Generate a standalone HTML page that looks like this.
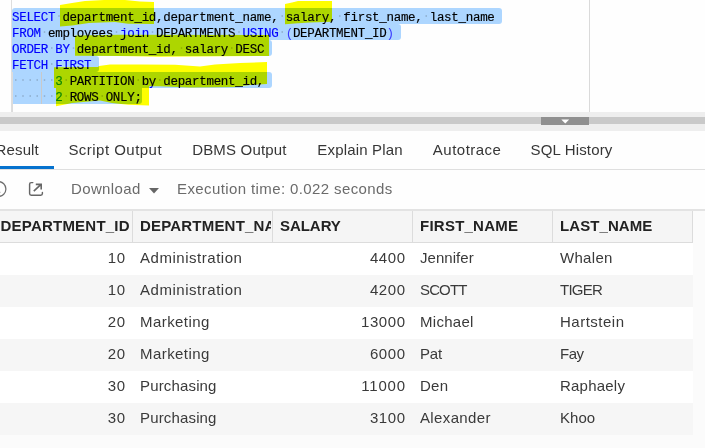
<!DOCTYPE html>
<html><head><meta charset="utf-8">
<style>
*{box-sizing:border-box;}
html,body{margin:0;padding:0;}
body{width:705px;height:448px;overflow:hidden;position:relative;background:#fefefe;font-family:"Liberation Sans",sans-serif;}
.abs{position:absolute;}
.t{position:absolute;white-space:nowrap;}
#editor{left:0;top:0;width:705px;height:112px;background:#fefefe;overflow:hidden;}
.gl{left:11px;top:0;width:1px;height:112px;background:#dedede;}
.ruler{left:589px;top:0;width:1px;height:112px;background:#dadada;}
.sel{background:#add6ff;}
.code{left:12px;top:9.5px;font-family:"Liberation Mono",monospace;font-size:12.5px;letter-spacing:-0.3px;line-height:16px;color:#000;-webkit-text-stroke:0.15px currentColor;}
.code div{height:16px;white-space:pre;}
.k{color:#0000ff;}
.n{color:#098658;}
.b{color:#3a3aff;-webkit-text-stroke:0;}
.w{color:rgba(51,51,51,0.2);-webkit-text-stroke:0;position:relative;top:-1px;}
.ig{width:1px;height:16px;background:#c9c9c9;}
svg.hl{left:0;top:0;mix-blend-mode:multiply;}
#split{left:0;top:112px;width:705px;height:19px;background:#eeeeee;}
#split .band{left:0;top:5px;width:705px;height:7px;background:#c9c9c9;}
#split .handle{left:541px;top:5px;width:48px;height:8px;background:#909090;}
.uline{left:0;top:166px;width:54px;height:3px;background:#0572ce;}
.sep{left:0;top:169px;width:705px;height:1px;background:#dfdfdf;}
.topb{left:0;top:209px;width:705px;height:2px;background:#e3e3e3;}
.hdr{top:211px;height:32px;background:#f5f5f5;border-right:1px solid #dcdcdc;border-bottom:1px solid #dcdcdc;}
.gridbg{left:0;top:211px;width:705px;height:237px;background:#fbfbfb;}
</style></head>
<body>
<div id="editor" class="abs">
  <div class="abs gl"></div>
  <div class="abs ruler"></div>
  <div class="abs sel" style="left:12px;top:8px;width:490px;height:16px;border-radius:3px 3px 3px 0;"></div>
  <div class="abs sel" style="left:12px;top:24px;width:389px;height:16px;border-radius:0 3px 3px 0;"></div>
  <div class="abs sel" style="left:12px;top:40px;width:260px;height:16px;border-radius:0 3px 3px 0;"></div>
  <div class="abs sel" style="left:12px;top:56px;width:87px;height:16px;border-radius:0 3px 3px 0;"></div>
  <div class="abs sel" style="left:12px;top:72px;width:260px;height:16px;border-radius:0 3px 3px 0;"></div>
  <div class="abs sel" style="left:12px;top:88px;width:130px;height:16px;border-radius:0 0 3px 1px;"></div>
  <div class="abs ig" style="left:12px;top:72px;height:40px;background:#dcdcdc;"></div>
  <div class="abs ig" style="left:41px;top:72px;"></div>
  <div class="abs ig" style="left:41px;top:88px;"></div>
  <div class="abs code">
<div><span class="k">SELECT</span><span class="w">·</span>department_id,department_name,<span class="w">·</span>salary,<span class="w">·</span>first_name,<span class="w">·</span>last_name</div>
<div><span class="k">FROM</span><span class="w">·</span>employees<span class="w">·</span><span class="k">join</span><span class="w">·</span>DEPARTMENTS<span class="w">·</span><span class="k">USING</span><span class="w">·</span><span class="b">(</span>DEPARTMENT_ID<span class="b">)</span></div>
<div><span class="k">ORDER</span><span class="w">·</span><span class="k">BY</span><span class="w">·</span>department_id,<span class="w">·</span>salary<span class="w">·</span>DESC</div>
<div><span class="k">FETCH</span><span class="w">·</span><span class="k">FIRST</span></div>
<div><span class="w">······</span><span class="n">3</span><span class="w">·</span>PARTITION<span class="w">·</span><span class="k">by</span><span class="w">·</span>department_id,</div>
<div><span class="w">······</span><span class="n">2</span><span class="w">·</span>ROWS<span class="w">·</span>ONLY;</div>
  </div>
  <svg class="abs hl" width="705" height="112" viewBox="0 0 705 112">
    <g fill="#ffff00">
      <polygon points="60,5 72,3 85,1 104,0 125,0 140,1.5 154,2 154,24 128,23.8 115,22 89,23 72,25.5 60,26.4"/>
      <polygon points="285,4 292,2.5 298,1 332,1 332,21.8 310,22.5 298,23.3 285,24.3"/>
      <polygon points="75,35.5 120,34.8 269,35 269,56 160,56.8 120,56 75,55.8"/>
      <polygon points="54,67.2 98,67 99,66 110,64.5 140,64.6 175,64.8 200,66.5 215,64.5 240,63 267,62 267,84 250,85 235,87 190,87.4 160,86.2 149,86.2 149,105.5 128,104.7 112,103 100,100.4 72,102.9 65,104.6 56,106.3 56,88 54,88"/>
    </g>
  </svg>
</div>
<div id="split" class="abs">
  <div class="abs band"></div>
  <div class="abs handle"></div>
  <svg class="abs" style="left:561px;top:6.5px" width="10" height="6"><polygon points="0.3,0.5 8.2,0.5 4.25,4.6" fill="#fff"/></svg>
</div>
<div class="abs uline"></div>
<div class="abs sep"></div>
<div class="t" style="top:142.00px;font-size:15.0px;line-height:15.0px;color:#363636;letter-spacing:0.123px;left:-4.40px;">Result</div>
<div class="t" style="top:142.00px;font-size:15.0px;line-height:15.0px;color:#363636;letter-spacing:0.473px;left:68.40px;">Script Output</div>
<div class="t" style="top:142.00px;font-size:15.0px;line-height:15.0px;color:#363636;letter-spacing:0.172px;left:192.20px;">DBMS Output</div>
<div class="t" style="top:142.00px;font-size:15.0px;line-height:15.0px;color:#363636;letter-spacing:0.175px;left:317.30px;">Explain Plan</div>
<div class="t" style="top:142.00px;font-size:15.0px;line-height:15.0px;color:#363636;letter-spacing:0.493px;left:432.80px;">Autotrace</div>
<div class="t" style="top:142.00px;font-size:15.0px;line-height:15.0px;color:#363636;letter-spacing:0.152px;left:530.50px;">SQL History</div>
<svg class="abs" style="left:0;top:170px" width="60" height="40">
  <circle cx="-1.5" cy="19" r="7.4" fill="none" stroke="#6e6e6e" stroke-width="1.25"/><rect x="0" y="21.8" width="1" height="1" fill="#ccc"/>
  <path d="M32.8,12.6 H31.2 Q29.6,12.6 29.6,14.2 V23.6 Q29.6,25.2 31.2,25.2 H40.8 Q42.4,25.2 42.4,23.6 V22.4" fill="none" stroke="#666" stroke-width="1.45" stroke-linecap="round"/>
  <path d="M33.8,21.2 L41,14.4 M35.8,14.4 H41.2 V19.6" fill="none" stroke="#666" stroke-width="1.6"/>
</svg>
<svg class="abs" style="left:148px;top:187px" width="12" height="8"><polygon points="1,1 11,1 6,6.5" fill="#666"/></svg>
<div class="t" style="top:181.00px;font-size:15.0px;line-height:15.0px;color:#6b6b6b;letter-spacing:0.360px;left:71.00px;">Download</div>
<div class="t" style="top:181.00px;font-size:15.0px;line-height:15.0px;color:#6b6b6b;letter-spacing:0.394px;left:177.00px;">Execution time: 0.022 seconds</div>
<div class="abs gridbg"></div>
<div class="abs topb"></div>
<div class="abs hdr" style="left:-8px;width:141px;"></div>
<div class="abs hdr" style="left:133px;width:140px;"></div>
<div class="abs hdr" style="left:273px;width:140px;"></div>
<div class="abs hdr" style="left:413px;width:140px;"></div>
<div class="abs hdr" style="left:553px;width:140px;"></div>
<div class="t" style="top:218.30px;font-size:15.0px;line-height:15.0px;color:#222222;letter-spacing:0.223px;font-weight:bold;left:0.50px;">DEPARTMENT_ID</div>
<div class="t" style="top:218.30px;font-size:15.0px;line-height:15.0px;color:#222222;letter-spacing:-0.048px;font-weight:bold;left:280.00px;">SALARY</div>
<div class="t" style="top:218.30px;font-size:15.0px;line-height:15.0px;color:#222222;letter-spacing:0.240px;font-weight:bold;left:420.00px;">FIRST_NAME</div>
<div class="t" style="top:218.30px;font-size:15.0px;line-height:15.0px;color:#222222;letter-spacing:0.085px;font-weight:bold;left:560.00px;">LAST_NAME</div>
<div class="abs" style="left:0;top:0;width:271px;height:448px;overflow:hidden;clip-path:inset(0 0 0 132px)"><div class="t" style="top:218.30px;font-size:15.0px;line-height:15.0px;color:#222222;letter-spacing:0.196px;font-weight:bold;left:140.00px;">DEPARTMENT_NAME</div></div>
<div class="abs" style="left:0;top:243px;width:693px;height:32px;background:#ffffff"></div>
<div class="abs" style="left:0;top:275px;width:693px;height:32px;background:#f6f6f6"></div>
<div class="abs" style="left:0;top:307px;width:693px;height:32px;background:#ffffff"></div>
<div class="abs" style="left:0;top:339px;width:693px;height:32px;background:#f6f6f6"></div>
<div class="abs" style="left:0;top:371px;width:693px;height:32px;background:#ffffff"></div>
<div class="abs" style="left:0;top:403px;width:693px;height:32px;background:#f6f6f6"></div>
<div class="t" style="top:250.00px;font-size:15.0px;line-height:15.0px;color:#3a3a3a;letter-spacing:0.565px;right:579.44px;">10</div>
<div class="t" style="top:250.00px;font-size:15.0px;line-height:15.0px;color:#3a3a3a;letter-spacing:0.529px;left:140.00px;">Administration</div>
<div class="t" style="top:250.00px;font-size:15.0px;line-height:15.0px;color:#3a3a3a;letter-spacing:0.565px;right:299.44px;">4400</div>
<div class="t" style="top:250.00px;font-size:15.0px;line-height:15.0px;color:#3a3a3a;letter-spacing:0.039px;left:420.00px;">Jennifer</div>
<div class="t" style="top:250.00px;font-size:15.0px;line-height:15.0px;color:#3a3a3a;letter-spacing:0.302px;left:560.00px;">Whalen</div>
<div class="t" style="top:282.00px;font-size:15.0px;line-height:15.0px;color:#3a3a3a;letter-spacing:0.565px;right:579.44px;">10</div>
<div class="t" style="top:282.00px;font-size:15.0px;line-height:15.0px;color:#3a3a3a;letter-spacing:0.529px;left:140.00px;">Administration</div>
<div class="t" style="top:282.00px;font-size:15.0px;line-height:15.0px;color:#3a3a3a;letter-spacing:0.565px;right:299.44px;">4200</div>
<div class="t" style="top:282.00px;font-size:15.0px;line-height:15.0px;color:#3a3a3a;letter-spacing:-0.858px;left:420.00px;">SCOTT</div>
<div class="t" style="top:282.00px;font-size:15.0px;line-height:15.0px;color:#3a3a3a;letter-spacing:-0.747px;left:560.00px;">TIGER</div>
<div class="t" style="top:314.00px;font-size:15.0px;line-height:15.0px;color:#3a3a3a;letter-spacing:0.565px;right:579.44px;">20</div>
<div class="t" style="top:314.00px;font-size:15.0px;line-height:15.0px;color:#3a3a3a;letter-spacing:0.435px;left:140.00px;">Marketing</div>
<div class="t" style="top:314.00px;font-size:15.0px;line-height:15.0px;color:#3a3a3a;letter-spacing:0.565px;right:299.44px;">13000</div>
<div class="t" style="top:314.00px;font-size:15.0px;line-height:15.0px;color:#3a3a3a;letter-spacing:0.276px;left:420.00px;">Michael</div>
<div class="t" style="top:314.00px;font-size:15.0px;line-height:15.0px;color:#3a3a3a;letter-spacing:0.499px;left:560.00px;">Hartstein</div>
<div class="t" style="top:346.00px;font-size:15.0px;line-height:15.0px;color:#3a3a3a;letter-spacing:0.565px;right:579.44px;">20</div>
<div class="t" style="top:346.00px;font-size:15.0px;line-height:15.0px;color:#3a3a3a;letter-spacing:0.435px;left:140.00px;">Marketing</div>
<div class="t" style="top:346.00px;font-size:15.0px;line-height:15.0px;color:#3a3a3a;letter-spacing:0.565px;right:299.44px;">6000</div>
<div class="t" style="top:346.00px;font-size:15.0px;line-height:15.0px;color:#3a3a3a;letter-spacing:-0.211px;left:420.00px;">Pat</div>
<div class="t" style="top:346.00px;font-size:15.0px;line-height:15.0px;color:#3a3a3a;letter-spacing:-0.458px;left:560.00px;">Fay</div>
<div class="t" style="top:378.00px;font-size:15.0px;line-height:15.0px;color:#3a3a3a;letter-spacing:0.565px;right:579.44px;">30</div>
<div class="t" style="top:378.00px;font-size:15.0px;line-height:15.0px;color:#3a3a3a;letter-spacing:0.157px;left:140.00px;">Purchasing</div>
<div class="t" style="top:378.00px;font-size:15.0px;line-height:15.0px;color:#3a3a3a;letter-spacing:0.787px;right:299.21px;">11000</div>
<div class="t" style="top:378.00px;font-size:15.0px;line-height:15.0px;color:#3a3a3a;letter-spacing:0.250px;left:420.00px;">Den</div>
<div class="t" style="top:378.00px;font-size:15.0px;line-height:15.0px;color:#3a3a3a;letter-spacing:0.219px;left:560.00px;">Raphaely</div>
<div class="t" style="top:410.00px;font-size:15.0px;line-height:15.0px;color:#3a3a3a;letter-spacing:0.565px;right:579.44px;">30</div>
<div class="t" style="top:410.00px;font-size:15.0px;line-height:15.0px;color:#3a3a3a;letter-spacing:0.157px;left:140.00px;">Purchasing</div>
<div class="t" style="top:410.00px;font-size:15.0px;line-height:15.0px;color:#3a3a3a;letter-spacing:0.565px;right:299.44px;">3100</div>
<div class="t" style="top:410.00px;font-size:15.0px;line-height:15.0px;color:#3a3a3a;letter-spacing:0.365px;left:420.00px;">Alexander</div>
<div class="t" style="top:410.00px;font-size:15.0px;line-height:15.0px;color:#3a3a3a;letter-spacing:0.038px;left:560.00px;">Khoo</div>
</body></html>
